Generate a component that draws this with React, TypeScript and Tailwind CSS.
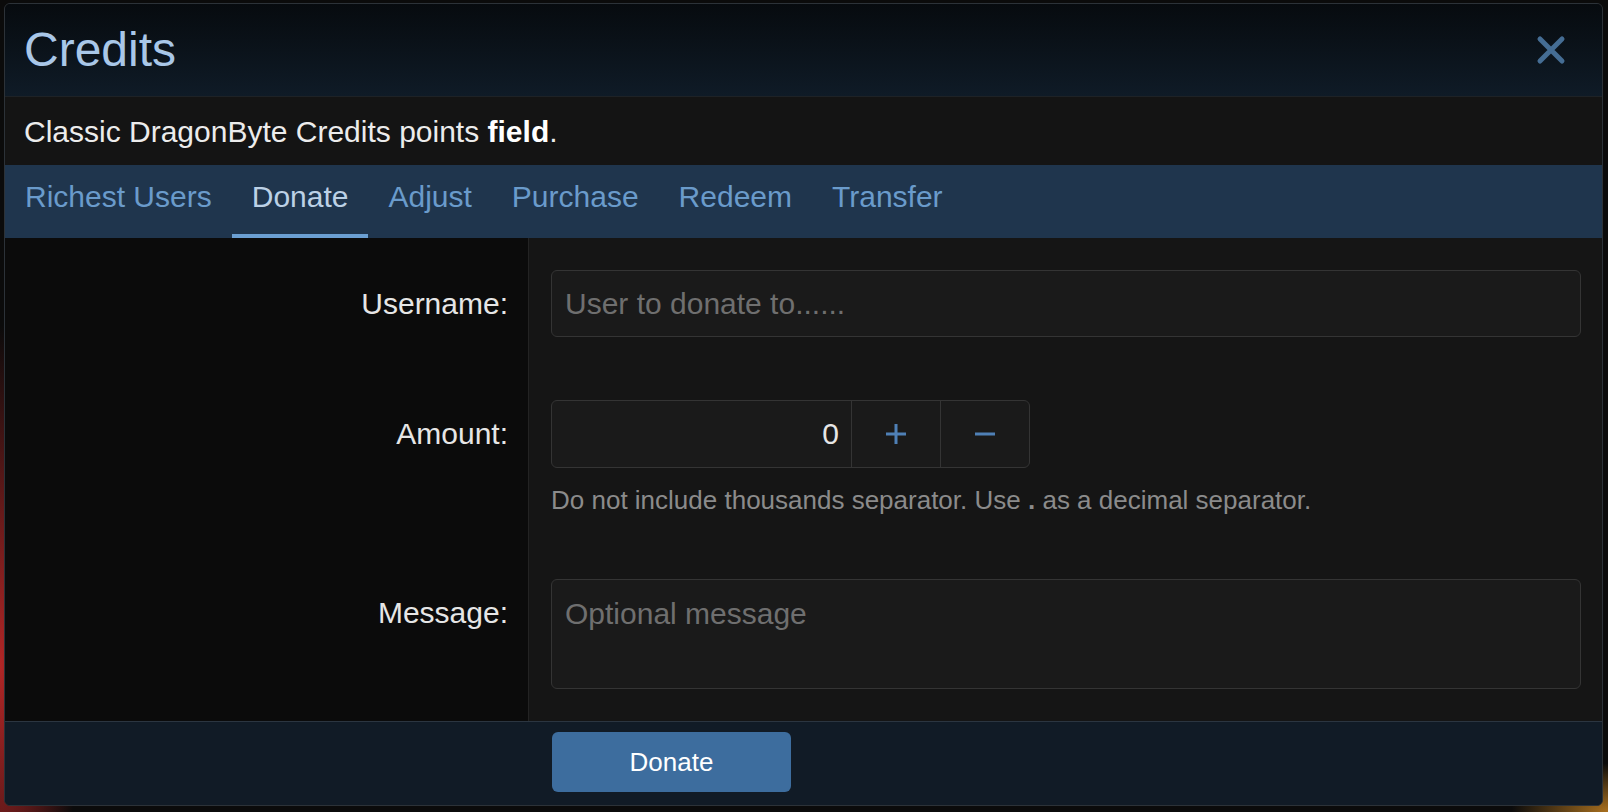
import React, { useState } from "react";

const tabs = ["Richest Users", "Donate", "Adjust", "Purchase", "Redeem", "Transfer"];

function CloseIcon() {
  return (
    <svg width="30" height="30" viewBox="0 0 30 30" fill="none">
      <path d="M4 4 L26 26 M26 4 L4 26" stroke="#456d94" strokeWidth="5" strokeLinecap="round" />
    </svg>
  );
}

function PlusIcon() {
  return (
    <svg width="22" height="22" viewBox="0 0 22 22" fill="none">
      <path d="M11 1 V21 M1 11 H21" stroke="#4f80b6" strokeWidth="3" />
    </svg>
  );
}

function MinusIcon() {
  return (
    <svg width="22" height="22" viewBox="0 0 22 22" fill="none">
      <path d="M1 11 H21" stroke="#4f80b6" strokeWidth="3" />
    </svg>
  );
}

export default function App() {
  const [activeTab, setActiveTab] = useState("Donate");
  const [amount, setAmount] = useState(0);

  return (
    <div
      className="w-[1608px] h-[812px] overflow-hidden bg-[#0b0b0b] bg-[image:radial-gradient(ellipse_5%_42%_at_0%_82%,#b12626_0%,#b1262600_100%),radial-gradient(ellipse_6%_6%_at_100%_100%,#a9701f_0%,#a9701f00_100%)] pt-[3px] pl-[4px] pr-[5px] pb-[6px]"
      style={{ fontFamily: '"Liberation Sans", Arial, sans-serif' }}
    >
      {/* Overlay dialog */}
      <div className="flex h-full flex-col overflow-hidden rounded-[6px] border border-[#2c3238] bg-[#151515]">
        {/* Header */}
        <div className="flex h-[92px] shrink-0 items-center justify-between bg-gradient-to-b from-[#070b0f] to-[#0f1b27] pl-[19px] pr-[36px]">
          <h1 className="text-[48px] leading-none text-[#a9c7e8]">Credits</h1>
          <button className="flex items-center justify-center">
            <CloseIcon />
          </button>
        </div>

        {/* Description */}
        <div className="flex h-[69px] shrink-0 items-center border-t border-[#1e2226] bg-[#141414] pl-[19px] text-[30px] text-[#ececec]">
          <span>
            Classic DragonByte Credits points <b className="font-bold text-white">field</b>.
          </span>
        </div>

        {/* Tabs */}
        <div className="flex h-[73px] shrink-0 bg-[#1f354d]">
          {tabs.map((tab) => {
            const isActive = tab === activeTab;
            return (
              <button
                key={tab}
                onClick={() => setActiveTab(tab)}
                className={`flex h-full items-center border-b-[4px] px-[20px] pt-[1px] pb-[7px] text-[30px] leading-none ${
                  isActive ? "border-[#6b9fd2] text-[#bcd1e6]" : "border-transparent text-[#6a9bcb]"
                }`}
              >
                {tab}
              </button>
            );
          })}
        </div>

        {/* Form body */}
        <div className="flex flex-1 flex-col">
          {/* Username */}
          <div className="flex">
            <div className="w-[524px] shrink-0 border-r border-[#232323] bg-[#0b0b0b] pt-[32px] pb-[31px] pr-[20px] text-right">
              <label className="block text-[30px] leading-[67px] text-[#e6e6e6]">Username:</label>
            </div>
            <div className="flex-1 pt-[32px] pb-[31px] pl-[22px] pr-[21px]">
              <input
                type="text"
                placeholder="User to donate to......"
                className="h-[67px] w-full rounded-[6px] border border-[#343434] bg-[#1a1a1a] px-[13px] text-[30px] text-[#e6e6e6] placeholder-[#6f6f6f] outline-none"
              />
            </div>
          </div>

          {/* Amount */}
          <div className="flex">
            <div className="w-[524px] shrink-0 border-r border-[#232323] bg-[#0b0b0b] pt-[32px] pb-[29px] pr-[20px] text-right">
              <label className="block text-[30px] leading-[68px] text-[#e6e6e6]">Amount:</label>
            </div>
            <div className="flex-1 pt-[32px] pb-[29px] pl-[22px] pr-[21px]">
              <div className="flex h-[68px] w-[479px] overflow-hidden rounded-[6px] border border-[#343434] bg-[#1a1a1a]">
                <input
                  type="text"
                  value={amount}
                  onChange={(e) => setAmount(Number(e.target.value) || 0)}
                  className="h-full w-[299px] bg-transparent pr-[12px] text-right text-[30px] text-[#e6e6e6] outline-none"
                />
                <button
                  onClick={() => setAmount(amount + 1)}
                  className="flex h-full flex-1 items-center justify-center border-l border-[#343434]"
                >
                  <PlusIcon />
                </button>
                <button
                  onClick={() => setAmount(amount - 1)}
                  className="flex h-full flex-1 items-center justify-center border-l border-[#343434]"
                >
                  <MinusIcon />
                </button>
              </div>
              <p className="mt-[14px] text-[26px] leading-[36px] text-[#8b8b8b]">
                Do not include thousands separator. Use <b className="font-bold">.</b> as a decimal separator.
              </p>
            </div>
          </div>

          {/* Message */}
          <div className="flex flex-1">
            <div className="w-[524px] shrink-0 border-r border-[#232323] bg-[#0b0b0b] pt-[32px] pr-[20px] text-right">
              <label className="block text-[30px] leading-[67px] text-[#e6e6e6]">Message:</label>
            </div>
            <div className="flex-1 pt-[32px] pb-[32px] pl-[22px] pr-[21px]">
              <textarea
                placeholder="Optional message"
                className="block h-[110px] w-full resize-none rounded-[6px] border border-[#343434] bg-[#1a1a1a] px-[13px] pt-[16px] text-[30px] leading-[36px] text-[#e6e6e6] placeholder-[#6f6f6f] outline-none"
              />
            </div>
          </div>
        </div>

        {/* Footer */}
        <div className="flex h-[85px] shrink-0 items-start border-t border-[#2b3540] bg-[#111b26] pl-[547px] pt-[10px]">
          <button className="h-[60px] w-[239px] rounded-[6px] bg-[#3d6d9e] text-[26px] text-white">Donate</button>
        </div>
      </div>
    </div>
  );
}
